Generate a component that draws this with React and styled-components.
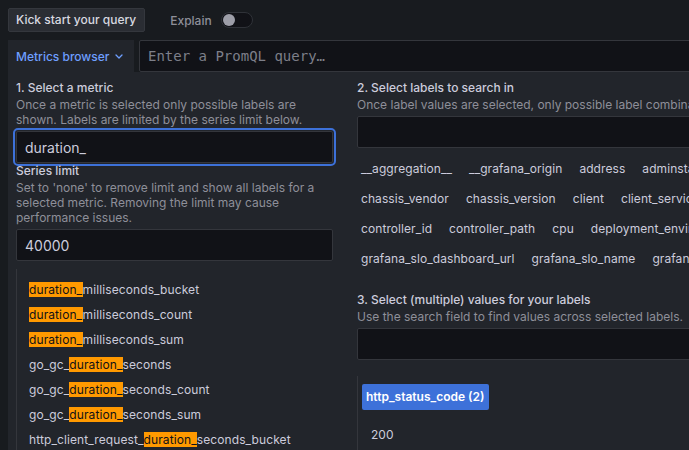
import React from "react";
import styled, { createGlobalStyle } from "styled-components";

const GlobalStyle = createGlobalStyle`
  html, body { margin: 0; padding: 0; background: #181b1f; overflow: hidden; }
  body { font-family: Inter, "Noto Sans", sans-serif; color: #ccccdc; }
  * { box-sizing: border-box; }
`;

const Page = styled.div`
  width: 1100px;
  height: 450px;
  padding: 8px 0 0 8px;
  display: flex;
  flex-direction: column;
`;

const Toolbar = styled.div`
  display: flex;
  align-items: center;
  height: 24px;
`;

const KickButton = styled.button`
  height: 24px;
  padding: 0 8px 0 7px;
  background: #2a2d33;
  border: 1px solid #34373d;
  border-radius: 2px;
  color: #d8d9e0;
  font: 500 12px/22px Inter, sans-serif;
`;

const SwitchLabel = styled.span`
  margin-left: 25px;
  font-size: 12px;
  font-weight: 500;
  color: #8e8f99;
`;

const Switch = styled.span`
  margin-left: 9px;
  width: 32px;
  height: 16px;
  border-radius: 8px;
  background: #111217;
  border: 1px solid #2f3238;
  display: flex;
  align-items: center;
  padding-left: 1px;
`;

const Knob = styled.span`
  width: 12px;
  height: 12px;
  border-radius: 50%;
  background: #9d9ea8;
`;

const EditorRow = styled.div`
  margin-top: 8px;
  display: flex;
  align-items: flex-start;
`;

const Tab = styled.div`
  width: 126px;
  height: 32px;
  background: #22252b;
  display: flex;
  align-items: center;
  gap: 6px;
  padding-left: 8px;
  color: #6e9fff;
  font-size: 12px;
  font-weight: 500;
`;

const QueryField = styled.div`
  margin-left: 5px;
  flex: 1;
  height: 32px;
  background: #111217;
  border: 1px solid #34363c;
  border-radius: 2px;
  display: flex;
  align-items: center;
  padding-left: 8px;
  font-family: "DejaVu Sans Mono", "Liberation Mono", monospace;
  font-size: 14px;
  color: #7d7f89;
`;

const Panel = styled.div`
  flex: 1;
  background: #22252b;
  padding: 8px 8px 0 8px;
  display: flex;
  gap: 24px;
`;

const Column = styled.div`
  display: flex;
  flex-direction: column;
  width: ${(p) => (p.$wide ? "735px" : "317px")};
  flex-shrink: 0;
`;

const Heading = styled.div`
  font-size: 12px;
  font-weight: 500;
  line-height: 15px;
  color: #ccccdc;
  margin-top: ${(p) => p.$gap || 0}px;
  white-space: nowrap;
`;

const Description = styled.div`
  margin-top: 2px;
  font-size: 12px;
  line-height: 15px;
  color: #8e8f99;
`;

const Input = styled.div`
  margin-top: 4px;
  height: 32px;
  background: #111217;
  border: 1px solid #34363c;
  border-radius: 2px;
  padding: 0 8px;
  display: flex;
  align-items: center;
  font-size: 14px;
  color: #ccccdc;
  outline: ${(p) => (p.$focused ? "2px solid #3d71d9" : "none")};
  outline-offset: 1px;
`;

const MetricList = styled.div`
  margin-top: 8px;
  border-left: 1px solid #34363c;
  padding: 8px 0 0 12px;
  flex: 1;
`;

const MetricItem = styled.div`
  font-size: 12px;
  line-height: 25px;
  letter-spacing: 0.1px;
  color: #ccccdc;
  white-space: nowrap;
`;

const Highlight = styled.mark`
  background: #ff9900;
  color: #111217;
`;

const LabelRows = styled.div`
  margin-top: 6px;
  display: flex;
  flex-direction: column;
`;

const LabelRow = styled.div`
  display: flex;
  gap: 9px;
  height: 30px;
  white-space: nowrap;
`;

const LabelChip = styled.span`
  padding: 0 4px;
  font-size: 12px;
  line-height: 30px;
  letter-spacing: 0.08px;
  color: #ccccdc;
`;

const ValueList = styled.div`
  margin-top: 16px;
  border-left: 1px solid #34363c;
  padding: 8px 0 0 4px;
  flex: 1;
`;

const SelectedLabel = styled.span`
  display: inline-block;
  background: #3d71d9;
  color: #ffffff;
  font-size: 12px;
  font-weight: 600;
  line-height: 26px;
  padding: 0 5px 0 4px;
  border-radius: 2px;
`;

const ValueItem = styled.div`
  margin-top: 12px;
  padding-left: 9px;
  font-size: 12px;
  line-height: 25px;
  color: #ccccdc;
`;

const metrics = [
  ["", "duration_", "milliseconds_bucket"],
  ["", "duration_", "milliseconds_count"],
  ["", "duration_", "milliseconds_sum"],
  ["go_gc_", "duration_", "seconds"],
  ["go_gc_", "duration_", "seconds_count"],
  ["go_gc_", "duration_", "seconds_sum"],
  ["http_client_request_", "duration_", "seconds_bucket"],
];

const labelRows = [
  ["__aggregation__", "__grafana_origin", "address", "adminstate"],
  ["chassis_vendor", "chassis_version", "client", "client_service"],
  ["controller_id", "controller_path", "cpu", "deployment_environment"],
  ["grafana_slo_dashboard_url", "grafana_slo_name", "grafana_slo_uuid"],
];

const Chevron = () => (
  <svg width="8" height="5" viewBox="0 0 8 5" fill="none">
    <path d="M1 1l3 3 3-3" stroke="#6e9fff" strokeWidth="1.3" strokeLinecap="round" strokeLinejoin="round" />
  </svg>
);

export default function App() {
  return (
    <>
      <GlobalStyle />
      <Page>
        <Toolbar>
          <KickButton>Kick start your query</KickButton>
          <SwitchLabel>Explain</SwitchLabel>
          <Switch>
            <Knob />
          </Switch>
        </Toolbar>
        <EditorRow>
          <Tab>
            Metrics browser
            <Chevron />
          </Tab>
          <QueryField>Enter a PromQL query…</QueryField>
        </EditorRow>
        <Panel>
          <Column>
            <Heading>1. Select a metric</Heading>
            <Description>
              Once a metric is selected only possible labels are shown. Labels are limited by the series limit below.
            </Description>
            <Input $focused>duration_</Input>
            <Heading>Series limit</Heading>
            <Description>
              Set to 'none' to remove limit and show all labels for a selected metric. Removing the limit may cause
              performance issues.
            </Description>
            <Input>40000</Input>
            <MetricList>
              {metrics.map(([pre, hit, post]) => (
                <MetricItem key={pre + hit + post}>
                  {pre}
                  <Highlight>{hit}</Highlight>
                  {post}
                </MetricItem>
              ))}
            </MetricList>
          </Column>
          <Column $wide>
            <Heading>2. Select labels to search in</Heading>
            <Description>
              Once label values are selected, only possible label combinations are shown.
            </Description>
            <Input />
            <LabelRows>
              {labelRows.map((row, i) => (
                <LabelRow key={i}>
                  {row.map((l) => (
                    <LabelChip key={l}>{l}</LabelChip>
                  ))}
                </LabelRow>
              ))}
            </LabelRows>
            <Heading $gap={18}>3. Select (multiple) values for your labels</Heading>
            <Description>Use the search field to find values across selected labels.</Description>
            <Input />
            <ValueList>
              <SelectedLabel>http_status_code (2)</SelectedLabel>
              <ValueItem>200</ValueItem>
            </ValueList>
          </Column>
        </Panel>
      </Page>
    </>
  );
}
